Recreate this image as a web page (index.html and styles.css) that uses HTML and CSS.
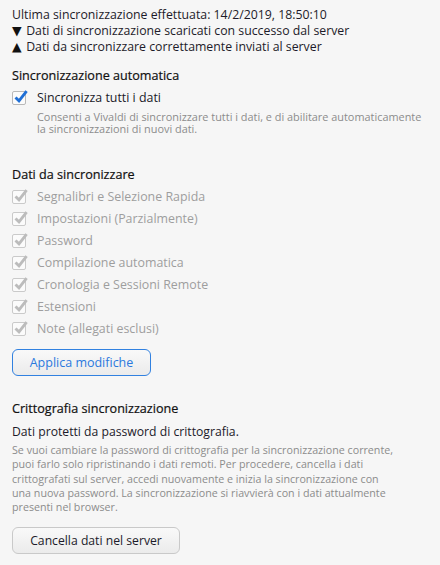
FILE: index.html
```html
<!DOCTYPE html>
<html lang="it">
<head>
<meta charset="utf-8">
<title>Sincronizzazione</title>
<link rel="stylesheet" href="styles.css">
</head>
<body>
<main class="page">
  <section class="status">
    <p class="first">Ultima sincronizzazione effettuata: 14/2/2019, 18:50:10</p>
    <p><span class="arrow">▼</span> Dati di sincronizzazione scaricati con successo dal server</p>
    <p><span class="arrow">▲</span> Dati da sincronizzare correttamente inviati al server</p>
  </section>

  <h3 class="heading h-auto">Sincronizzazione automatica</h3>
  <div class="check main">
    <span class="box on">
      <svg viewBox="0 0 18 18" width="18" height="18"><path d="M3.5 9.5 L7 12.8 L14.6 3.2" fill="none" stroke="#1f6fd6" stroke-width="2.9" stroke-linecap="butt" stroke-linejoin="miter"/></svg>
    </span>
    <div class="check-text">
      <div class="label">Sincronizza tutti i dati</div>
      <div class="desc">Consenti a Vivaldi di sincronizzare tutti i dati, e di abilitare automaticamente<br>la sincronizzazioni di nuovi dati.</div>
    </div>
  </div>

  <h3 class="heading h-data">Dati da sincronizzare</h3>
  <ul class="items">
    <li class="check off"><span class="box"><svg viewBox="0 0 18 18" width="18" height="18"><path d="M3.5 9.5 L7 12.8 L14.6 3.2" fill="none" stroke="#bcbcbc" stroke-width="2.9"/></svg></span><span class="label">Segnalibri e Selezione Rapida</span></li>
    <li class="check off"><span class="box"><svg viewBox="0 0 18 18" width="18" height="18"><path d="M3.5 9.5 L7 12.8 L14.6 3.2" fill="none" stroke="#bcbcbc" stroke-width="2.9"/></svg></span><span class="label">Impostazioni (Parzialmente)</span></li>
    <li class="check off"><span class="box"><svg viewBox="0 0 18 18" width="18" height="18"><path d="M3.5 9.5 L7 12.8 L14.6 3.2" fill="none" stroke="#bcbcbc" stroke-width="2.9"/></svg></span><span class="label">Password</span></li>
    <li class="check off"><span class="box"><svg viewBox="0 0 18 18" width="18" height="18"><path d="M3.5 9.5 L7 12.8 L14.6 3.2" fill="none" stroke="#bcbcbc" stroke-width="2.9"/></svg></span><span class="label">Compilazione automatica</span></li>
    <li class="check off"><span class="box"><svg viewBox="0 0 18 18" width="18" height="18"><path d="M3.5 9.5 L7 12.8 L14.6 3.2" fill="none" stroke="#bcbcbc" stroke-width="2.9"/></svg></span><span class="label">Cronologia e Sessioni Remote</span></li>
    <li class="check off"><span class="box"><svg viewBox="0 0 18 18" width="18" height="18"><path d="M3.5 9.5 L7 12.8 L14.6 3.2" fill="none" stroke="#bcbcbc" stroke-width="2.9"/></svg></span><span class="label">Estensioni</span></li>
    <li class="check off"><span class="box"><svg viewBox="0 0 18 18" width="18" height="18"><path d="M3.5 9.5 L7 12.8 L14.6 3.2" fill="none" stroke="#bcbcbc" stroke-width="2.9"/></svg></span><span class="label">Note (allegati esclusi)</span></li>
  </ul>
  <button class="btn primary" type="button">Applica modifiche</button>

  <h3 class="heading h-crypt">Crittografia sincronizzazione</h3>
  <p class="lead">Dati protetti da password di crittografia.</p>
  <p class="note">Se vuoi cambiare la password di crittografia per la sincronizzazione corrente,<br>puoi farlo solo ripristinando i dati remoti. Per procedere, cancella i dati<br>crittografati sul server, accedi nuovamente e inizia la sincronizzazione con<br>una nuova password. La sincronizzazione si riavvierà con i dati attualmente<br>presenti nel browser.</p>
  <button class="btn danger" type="button">Cancella dati nel server</button>
</main>
</body>
</html>
```

FILE: styles.css
```css
html, body {
  margin: 0;
  padding: 0;
  background: #f6f6f6;
}

body {
  font-family: "Open Sans", "Noto Sans", sans-serif;
  color: #1e1e1e;
  width: 440px;
  height: 565px;
  overflow: hidden;
}

.page {
  padding: 7px 12px 0 12px;
  display: flex;
  flex-direction: column;
  align-items: flex-start;
}

.status p {
  margin: 0;
  font-size: 12.3px;
  line-height: 15px;
  color: #1d1b29;
  white-space: nowrap;
}

.status p.first {
  margin-bottom: 1.4px;
}

.status p + p {
  margin-top: 0.8px;
}

.arrow {
  display: inline-block;
  width: 11px;
  font-family: "DejaVu Sans", sans-serif;
  font-size: 12.5px;
  line-height: 15px;
  color: #111;
}

.heading {
  margin: 0;
  font-size: 12.6px;
  line-height: 16px;
  font-weight: 400;
  color: #111;
  -webkit-text-stroke: 0.2px #111;
}

.h-auto { margin-top: 14.1px; }
.h-data { margin-top: 32.8px; }
.h-crypt { margin-top: 25.4px; }

.check {
  display: flex;
  align-items: flex-start;
}

.box {
  position: relative;
  flex: none;
  width: 12px;
  height: 12px;
  border: 1px solid #cacaca;
  border-radius: 2px;
  background: #fbfbfb;
}

.box svg {
  position: absolute;
  left: -1px;
  top: -4px;
  overflow: visible;
}

.main {
  margin-top: 5.8px;
}

.main .box {
  margin-top: 1.1px;
  border-color: #b9b9b9;
}

.check-text {
  margin-left: 11px;
}

.main .label {
  font-size: 12.4px;
  line-height: 16px;
  color: #1a1a28;
  white-space: nowrap;
}

.desc {
  margin-top: 4.9px;
  font-size: 10.9px;
  line-height: 11.7px;
  color: #8c8c8c;
  white-space: nowrap;
}

.items {
  list-style: none;
  margin: 6.1px 0 0 0;
  padding: 0;
  display: flex;
  flex-direction: column;
  gap: 5.9px;
}

.items .check {
  align-items: center;
  height: 16px;
}

.items .label {
  margin-left: 11px;
  font-size: 12.4px;
  line-height: 16px;
  color: #9e9e9e;
  white-space: nowrap;
}

.btn {
  height: 27px;
  padding: 0;
  border: 1px solid #c9c9c9;
  border-radius: 6px;
  background: linear-gradient(#f9f9f9, #ebebeb);
  font-family: inherit;
  color: #1c1b2a;
}

.btn.primary {
  margin-top: 12.4px;
  width: 139px;
  border-color: #3181e0;
  color: #2a78de;
  font-size: 12.5px;
}

.lead {
  margin: 6.6px 0 0 0;
  font-size: 12.2px;
  line-height: 16px;
  color: #1c1a2a;
  white-space: nowrap;
}

.note {
  margin: 3px 0 0 0;
  font-size: 10.7px;
  line-height: 14.3px;
  color: #8c8c8c;
  white-space: nowrap;
}

.btn.danger {
  margin-top: 12.5px;
  width: 168px;
  font-size: 12.2px;
}
```
